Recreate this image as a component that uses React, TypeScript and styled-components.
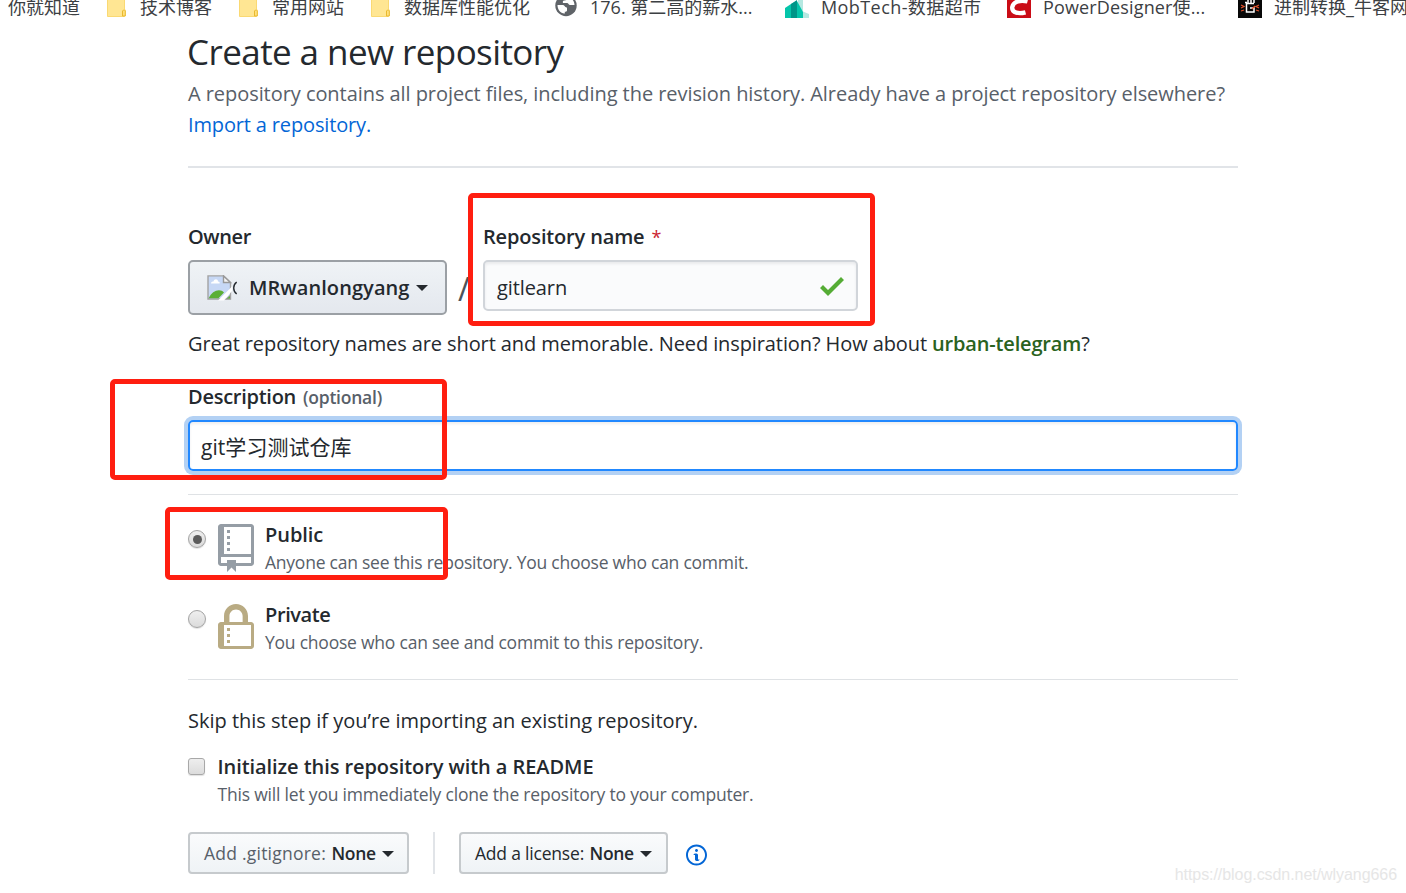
import React from "react";
import styled, { createGlobalStyle } from "styled-components";

const GlobalStyle = createGlobalStyle`
  * { box-sizing: border-box; }
  html, body { margin: 0; padding: 0; background: #fff; }
  body {
    font-family: "Open Sans", "Noto Sans CJK SC", sans-serif;
    font-size: 20px;
    color: #24292e;
    overflow: hidden;
  }
  h1, p { margin: 0; font-weight: 400; }
`;

const Page = styled.div`
  position: relative;
  width: 1406px;
  height: 893px;
  overflow: hidden;
`;

/* ---------- bookmarks bar ---------- */

const BookmarkBar = styled.nav`
  display: flex;
  gap: 24px;
  height: 27px;
  padding-left: 8px;
`;

const Bookmark = styled.div`
  display: flex;
  flex: none;
  gap: 12px;
  svg {
    flex: none;
    margin-top: -6px;
  }
`;

const BookmarkLabel = styled.span<{ $width?: number; $spacing?: number }>`
  width: ${(p) => (p.$width ? `${p.$width}px` : "auto")};
  height: 16px;
  font-size: 18px;
  line-height: 15px;
  letter-spacing: ${(p) => p.$spacing ?? 0}px;
  color: #3c4043;
  white-space: nowrap;
`;

/* ---------- page text ---------- */

const Main = styled.main`
  width: 1050px;
  margin-left: 188px;
`;

const Title = styled.h1`
  margin-left: -1px;
  font-size: 35px;
  line-height: 50px;
  letter-spacing: -0.58px;
  white-space: nowrap;
`;

const Lead = styled.p`
  padding-top: 1px;
  line-height: 31px;
  letter-spacing: -0.059px;
  color: #586069;
  white-space: nowrap;
`;

const Link = styled.a`
  color: #0366d6;
  letter-spacing: -0.15px;
`;

const Rule = styled.div<{ $top: number; $thick?: boolean }>`
  height: ${(p) => (p.$thick ? 2 : 1)}px;
  margin-top: ${(p) => p.$top}px;
  background: ${(p) => (p.$thick ? "#e1e4e8" : "#dfe2e5")};
`;

const Label = styled.div<{ $spacing: number }>`
  height: 30px;
  line-height: 30px;
  font-weight: 600;
  letter-spacing: ${(p) => p.$spacing}px;
  white-space: nowrap;
`;

const Required = styled.span`
  margin-left: 2px;
  font-size: 18px;
  font-weight: 400;
  color: #cb2431;
`;

const Optional = styled.span`
  margin-left: 2px;
  font-size: 17.5px;
  letter-spacing: -0.23px;
  color: #586069;
`;

/* ---------- owner and name ---------- */

const NameRow = styled.div`
  display: flex;
  margin-top: 54px;
`;

const Field = styled.div`
  display: flex;
  flex-direction: column;
  gap: 8px;
`;

const OwnerButton = styled.div`
  display: flex;
  align-items: center;
  width: 259px;
  height: 55px;
  padding: 0 17px;
  border: 2px solid #9ba0a5;
  border-radius: 5px;
  background: linear-gradient(180deg, #eff3f6, #e4e8ee);
  font-weight: 600;
  letter-spacing: 0.08px;
  svg:first-child { margin-right: 12px; }
`;

const Caret = styled.span`
  width: 0;
  height: 0;
  margin-left: 6px;
  border: 6px solid transparent;
  border-top-color: #24292e;
  border-bottom: 0;
  margin-top: 1px;
`;

const Slash = styled.div`
  width: 36px;
  padding: 50px 0 0 11px;
  font-size: 32px;
  line-height: 34px;
  font-weight: 400;
  color: #4b535b;
`;

const NameInput = styled.div`
  display: flex;
  align-items: center;
  justify-content: space-between;
  width: 375px;
  height: 51px;
  padding: 3px 12px 0;
  border: 2px solid #d1d5da;
  border-radius: 5px;
  background: #fafbfc;
  box-shadow: inset 0 2px 3px rgba(27, 31, 35, 0.075);
  letter-spacing: -0.1px;
  svg { margin-top: -2px; }
`;

const Hint = styled.p`
  margin-top: 14px;
  line-height: 30px;
  letter-spacing: -0.099px;
  white-space: nowrap;
  strong {
    font-weight: 600;
    letter-spacing: -0.17px;
    color: #2a6220;
  }
`;

const DescriptionField = styled(Field)`
  margin-top: 23px;
`;

const DescriptionInput = styled.div`
  width: 1050px;
  height: 51px;
  padding: 0 11px;
  border: 2px solid #2188ff;
  border-radius: 5px;
  box-shadow: inset 0 2px 3px rgba(27, 31, 35, 0.075), 0 0 0 4px #b3d1f4;
  line-height: 50px;
  font-size: 21px;
  letter-spacing: 0.05px;
`;

/* ---------- visibility ---------- */

const Option = styled.div<{ $top: number }>`
  display: flex;
  height: 56px;
  margin-top: ${(p) => p.$top}px;
  svg {
    flex: none;
    margin: 5px 11px 0 12px;
  }
`;

const Radio = styled.span`
  display: flex;
  flex: none;
  align-items: center;
  justify-content: center;
  width: 18px;
  height: 18px;
  margin-top: 11px;
  border: 1px solid #a3a3a3;
  border-radius: 50%;
  background: linear-gradient(180deg, #efefef, #dbdbdb);
  box-shadow: 0 1px 1px rgba(0, 0, 0, 0.12);
`;

const RadioDot = styled.span`
  width: 9px;
  height: 9px;
  border-radius: 50%;
  background: #5b5b5b;
`;

const OptionTitle = styled.div<{ $spacing: number }>`
  padding-top: 1px;
  height: 30px;
  line-height: 30px;
  font-weight: 600;
  letter-spacing: ${(p) => p.$spacing}px;
  white-space: nowrap;
`;

const Note = styled.p<{ $spacing: number }>`
  line-height: 26px;
  font-size: 17.5px;
  letter-spacing: ${(p) => p.$spacing}px;
  color: #586069;
  white-space: nowrap;
`;

/* ---------- initialisation ---------- */

const Skip = styled.p`
  margin-top: 25px;
  line-height: 31px;
  letter-spacing: -0.008px;
`;

const InitRow = styled.div`
  display: flex;
  gap: 12.5px;
  margin-top: 15px;
`;

const Checkbox = styled.span`
  width: 17px;
  height: 17px;
  margin-top: 7px;
  border: 1.5px solid #a8a8a8;
  border-radius: 3px;
  background: linear-gradient(180deg, #eeeeee, #dcdcdc);
  box-shadow: 0 1px 1px rgba(0, 0, 0, 0.12);
`;

const Selects = styled.div`
  display: flex;
  align-items: center;
  margin-top: 25px;
`;

const SelectButton = styled.div<{ $width: number; $muted?: boolean; $spacing: number }>`
  display: flex;
  align-items: center;
  width: ${(p) => p.$width}px;
  height: 42px;
  padding: 0 14px 0 14px;
  border: 2px solid #c6cacd;
  border-radius: 4px;
  background: linear-gradient(180deg, #fafbfc, #eff3f6);
  font-size: 17.5px;
  letter-spacing: ${(p) => p.$spacing}px;
  color: ${(p) => (p.$muted ? "#586069" : "#24292e")};
  white-space: nowrap;
`;

const SelectValue = styled.strong`
  margin-left: 5.5px;
  font-weight: 600;
  letter-spacing: -0.35px;
  color: #24292e;
`;

const SelectDivider = styled.span`
  width: 2px;
  height: 42px;
  margin: 0 24px;
  background: #e1e4e8;
`;

const InfoLink = styled.span`
  display: flex;
  margin: 3px 0 0 18px;
`;

/* ---------- annotations over the page ---------- */

const Marker = styled.div<{ $x: number; $y: number; $w: number; $h: number }>`
  position: absolute;
  left: ${(p) => p.$x}px;
  top: ${(p) => p.$y}px;
  width: ${(p) => p.$w}px;
  height: ${(p) => p.$h}px;
  border: 5px solid #ff1e10;
  border-radius: 5px;
`;

const Watermark = styled.div`
  position: absolute;
  right: 9px;
  bottom: 9px;
  font-family: "Liberation Sans", sans-serif;
  font-size: 16px;
  line-height: 18px;
  letter-spacing: -0.06px;
  color: #e6e6e6;
`;

/* ---------- icons ---------- */

const FolderIcon = () => (
  <svg width="24" height="24" viewBox="0 0 24 24">
    <path d="M3.5 0h17v15.5h.5v6.2l-1 .8H3.5z" fill="#ffe693" stroke="#fad973" />
    <path d="M18.5 22v-5l1-1h1l.8.8V22z" fill="#ffe07d" stroke="#e9b92e" />
  </svg>
);

const GlobeIcon = () => (
  <svg width="24" height="24" viewBox="0 0 24 24">
    <circle cx="12" cy="11.500" r="10.700" fill="#5f6368" />
    <path d="M3.500 11h5c2.500 0 2 2.500 4.500 2.500v3c0 1-1 1.300-2.200 1.300v1.700c-4 .3-7.300-3.500-7.300-8.500zM14 3c-1 2-1 3.500-3.500 3.500-1.500 0-2 1-1.500 2.500h4c1.500 0 1.500 2 3 2h4.500C20.300 7 18 4 14 3z" fill="#fff" />
  </svg>
);

const MobIcon = () => (
  <svg width="24" height="24" viewBox="0 0 24 24">
    <path d="M13 0l5 3v14.500l6 2.500v4H13z" fill="#b5e8e1" />
    <path d="M0 14l6-4 6-3v17H0z" fill="#04c5aa" />
    <path d="M6 10l6-4v18H6z" fill="#009588" />
    <path d="M12 7l6 11v6h-6z" fill="#04c5aa" />
  </svg>
);

const CIcon = () => (
  <svg width="24" height="24" viewBox="0 0 24 24">
    <path d="M0 0h24v24H0z" fill="#ca0c16" />
    <path d="M20.500 7.500C14 5.800 6.500 7 5.200 13.200c-.5 6 7 6.800 13.300 5.100" fill="none" stroke="#fff" strokeWidth="4.300" />
  </svg>
);

const ChipIcon = () => (
  <svg width="24" height="24" viewBox="0 0 24 24">
    <path d="M0 0h24v24H0z" fill="#080808" />
    <path d="M16 9.500H8.500v8.500h7.500v-4h-4M10 5v4M13 5v4M16 5v4M7 8.500h2" fill="none" stroke="#fff" strokeWidth="1.500" />
    <path d="M3 11l3 1.500-3 1.500M3 17l3-1M21 11l-3 1.500 3 1.500M21 17l-3-1M14 15l3-3" fill="none" stroke="#e0522c" strokeWidth="1.300" />
  </svg>
);

const BrokenImageIcon = () => (
  <svg width="30" height="26" viewBox="0 0 30 26">
    <path d="M1 .9h15.500L23.500 7.500v16.500H1z" fill="#c7d8f5" stroke="#a3a3a3" strokeWidth="1.400" />
    <path d="M4 8.500c0-2 2-2 2.500-2C7 3.500 11 3.500 11 6.500c2 0 2 2 1.500 2z" fill="#fff" />
    <path d="M1.700 23.300C5 15.500 13 13 17 17.500l-5.500 5.800z" fill="#5baf36" />
    <path d="M11 25.500L25 11.500v4.500L17 25.500z" fill="#fff" />
    <path d="M16.500 .9V7.500h7z" fill="#f4f4f4" stroke="#999" strokeWidth="1.400" />
    <path d="M19 24l4.500-4v4z" fill="#5baf36" stroke="#a3a3a3" />
    <path d="M29.700 7c-4 3-4 9 0 12" fill="none" stroke="#24292e" strokeWidth="1.400" />
  </svg>
);

const CheckIcon = () => (
  <svg width="24" height="32" viewBox="0 0 12 16">
    <path d="M12 5l-8 8-4-4 1.500-1.500L4 10l6.500-6.500L12 5z" fill="#55ac35" />
  </svg>
);

const RepoIcon = () => (
  <svg width="36" height="48" viewBox="0 0 12 16">
    <path fill="#959da5" fillRule="evenodd" d="M4 9H3V8h1v1zm0-3H3v1h1V6zm0-2H3v1h1V4zm0-2H3v1h1V2zm8-1v12c0 .55-.45 1-1 1H6v2l-1.500-1.500L3 16v-2H1c-.55 0-1-.45-1-1V1c0-.55.45-1 1-1h10c.55 0 1 .45 1 1zm-1 10H1v2h2v-1h3v1h5v-2zm0-10H2v9h9V1z" />
  </svg>
);

const LockIcon = () => (
  <svg width="36" height="48" viewBox="0 0 12 16">
    <path fill="#b9ab83" fillRule="evenodd" d="M4 13H3v-1h1v1zm8-6v7c0 .55-.45 1-1 1H1c-.55 0-1-.45-1-1V7c0-.55.45-1 1-1h1V4c0-2.200 1.800-4 4-4s4 1.800 4 4v2h1c.55 0 1 .45 1 1zM3.800 6h4.410V4c0-1.220-.98-2.200-2.200-2.200-1.220 0-2.200.98-2.200 2.200v2H3.800zM11 7H2v7h9V7zM4 8H3v1h1V8zm0 2H3v1h1v-1z" />
  </svg>
);

const InfoIcon = () => (
  <svg width="21" height="24" viewBox="0 0 14 16">
    <path fill="#0366d6" fillRule="evenodd" d="M6.300 5.690a.942.942 0 0 1-.28-.7c0-.28.09-.52.28-.7.19-.18.42-.28.7-.28.28 0 .52.09.7.28.18.19.28.42.28.7 0 .28-.09.52-.28.7a1 1 0 0 1-.7.3c-.28 0-.52-.11-.7-.3zM8 7.990c-.02-.25-.11-.48-.31-.69-.2-.19-.42-.3-.69-.31H6c-.27.02-.48.13-.69.31-.2.2-.3.44-.31.69h1v3c.02.27.11.5.31.69.2.2.42.31.69.31h1c.27 0 .48-.11.69-.31.2-.19.3-.42.31-.69H8V7.980v.01zM7 2.300c-3.140 0-5.700 2.540-5.700 5.680 0 3.140 2.560 5.700 5.700 5.700s5.700-2.550 5.700-5.700c0-3.150-2.560-5.690-5.700-5.690v.01zM7 .98c3.860 0 7 3.140 7 7s-3.140 7-7 7-7-3.120-7-7 3.140-7 7-7z" />
  </svg>
);

export default function App() {
  return (
    <Page>
      <GlobalStyle />
      <BookmarkBar>
        <Bookmark>
          <BookmarkLabel $width={72}>你就知道</BookmarkLabel>
        </Bookmark>
        <Bookmark>
          <FolderIcon />
          <BookmarkLabel $width={72}>技术博客</BookmarkLabel>
        </Bookmark>
        <Bookmark>
          <FolderIcon />
          <BookmarkLabel $width={72}>常用网站</BookmarkLabel>
        </Bookmark>
        <Bookmark>
          <FolderIcon />
          <BookmarkLabel $width={126}>数据库性能优化</BookmarkLabel>
        </Bookmark>
        <Bookmark>
          <GlobeIcon />
          <BookmarkLabel $width={171}>176. 第二高的薪水...</BookmarkLabel>
        </Bookmark>
        <Bookmark>
          <MobIcon />
          <BookmarkLabel $width={162} $spacing={0.42}>MobTech-数据超市</BookmarkLabel>
        </Bookmark>
        <Bookmark>
          <CIcon />
          <BookmarkLabel $width={171} $spacing={0.15}>PowerDesigner使...</BookmarkLabel>
        </Bookmark>
        <Bookmark>
          <ChipIcon />
          <BookmarkLabel>进制转换_牛客网</BookmarkLabel>
        </Bookmark>
      </BookmarkBar>

      <Main>
        <Title>Create a new repository</Title>
        <Lead>
          A repository contains all project files, including the revision history. Already have a project repository elsewhere?
          <br />
          <Link>Import a repository.</Link>
        </Lead>
        <Rule $top={26} $thick />

        <NameRow>
          <Field>
            <Label $spacing={-0.38}>Owner</Label>
            <OwnerButton>
              <BrokenImageIcon />
              MRwanlongyang
              <Caret />
            </OwnerButton>
          </Field>
          <Slash>/</Slash>
          <Field>
            <Label $spacing={-0.16}>
              Repository name <Required>*</Required>
            </Label>
            <NameInput>
              gitlearn
              <CheckIcon />
            </NameInput>
          </Field>
        </NameRow>
        <Hint>
          Great repository names are short and memorable. Need inspiration? How about <strong>urban-telegram</strong>?
        </Hint>

        <DescriptionField>
          <Label $spacing={-0.26}>
            Description <Optional>(optional)</Optional>
          </Label>
          <DescriptionInput>git学习测试仓库</DescriptionInput>
        </DescriptionField>
        <Rule $top={23} />

        <Option $top={24}>
          <Radio>
            <RadioDot />
          </Radio>
          <RepoIcon />
          <div>
            <OptionTitle $spacing={-0.06}>Public</OptionTitle>
            <Note $spacing={-0.235}>Anyone can see this repository. You choose who can commit.</Note>
          </div>
        </Option>
        <Option $top={24}>
          <Radio />
          <LockIcon />
          <div>
            <OptionTitle $spacing={-0.4}>Private</OptionTitle>
            <Note $spacing={-0.223}>You choose who can see and commit to this repository.</Note>
          </div>
        </Option>
        <Rule $top={24} />

        <Skip>Skip this step if you’re importing an existing repository.</Skip>
        <InitRow>
          <Checkbox />
          <div>
            <OptionTitle $spacing={-0.068}>Initialize this repository with a README</OptionTitle>
            <Note $spacing={-0.196}>This will let you immediately clone the repository to your computer.</Note>
          </div>
        </InitRow>
        <Selects>
          <SelectButton $width={221} $muted $spacing={0.23}>
            Add .gitignore: <SelectValue>None</SelectValue>
            <Caret />
          </SelectButton>
          <SelectDivider />
          <SelectButton $width={209} $spacing={-0.2}>
            Add a license: <SelectValue>None</SelectValue>
            <Caret />
          </SelectButton>
          <InfoLink>
            <InfoIcon />
          </InfoLink>
        </Selects>
      </Main>

      <Marker $x={468} $y={193} $w={407} $h={133} />
      <Marker $x={110} $y={379} $w={337} $h={101} />
      <Marker $x={165} $y={507} $w={283} $h={73} />
      <Watermark>https://blog.csdn.net/wlyang666</Watermark>
    </Page>
  );
}
